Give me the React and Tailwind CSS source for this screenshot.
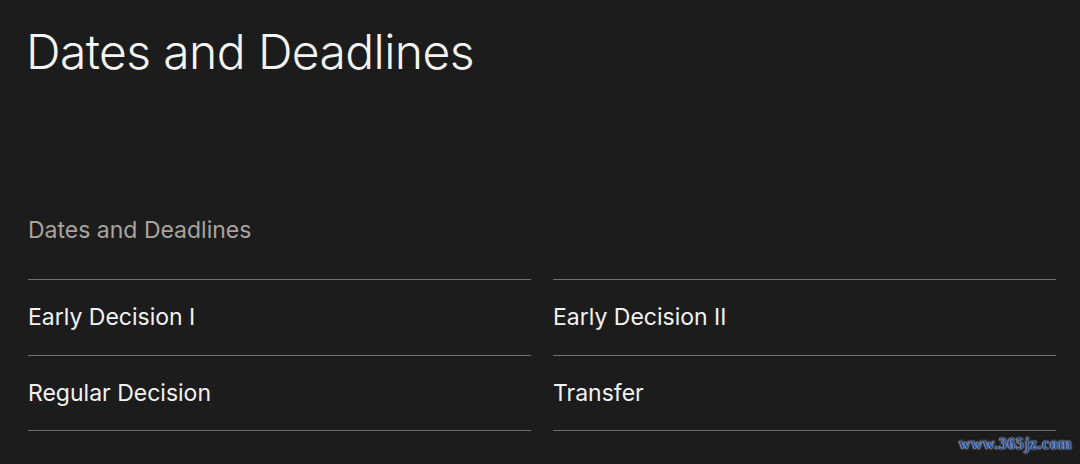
export default function App() {
  const rows = [
    ["Early Decision I", "Early Decision II"],
    ["Regular Decision", "Transfer"],
  ];
  return (
    <div className="w-[1080px] h-[464px] bg-[#1c1c1c] text-white relative overflow-hidden" style={{ fontFamily: "Inter, 'Liberation Sans', sans-serif" }}>
      <div className="pl-[28px] pr-[24px]">
        <h1 className="pt-[22px] text-[48px] leading-[60px] font-light tracking-[-0.6px] text-[#f5f5f5] -ml-[2px]">Dates and Deadlines</h1>
        <h2 className="mt-[134px] text-[23px] leading-[28px] text-[#a8a49f] font-normal">Dates and Deadlines</h2>
        <div className="mt-[35px] grid grid-cols-2 gap-x-[22px]">
          {[0, 1].map((c) => (
            <div key={c} className="flex flex-col">
              {rows.map((r, i) => (
                <div key={i} className={"h-[76px] flex items-center border-t border-[#6e6e6e] text-[23px] text-[#f2f2f2] " + (i === rows.length - 1 ? "border-b" : "")}>
                  {r[c]}
                </div>
              ))}
            </div>
          ))}
        </div>
      </div>
      <div className="absolute right-[8px] bottom-[8px] text-[16px] font-bold text-[#1f4f9a] tracking-[0.5px]" style={{ fontFamily: "'Liberation Serif', serif", textShadow: "0 0 2px #c8d4ea, 0 0 1px #ffffff" }}>www.365jz.com</div>
    </div>
  );
}
